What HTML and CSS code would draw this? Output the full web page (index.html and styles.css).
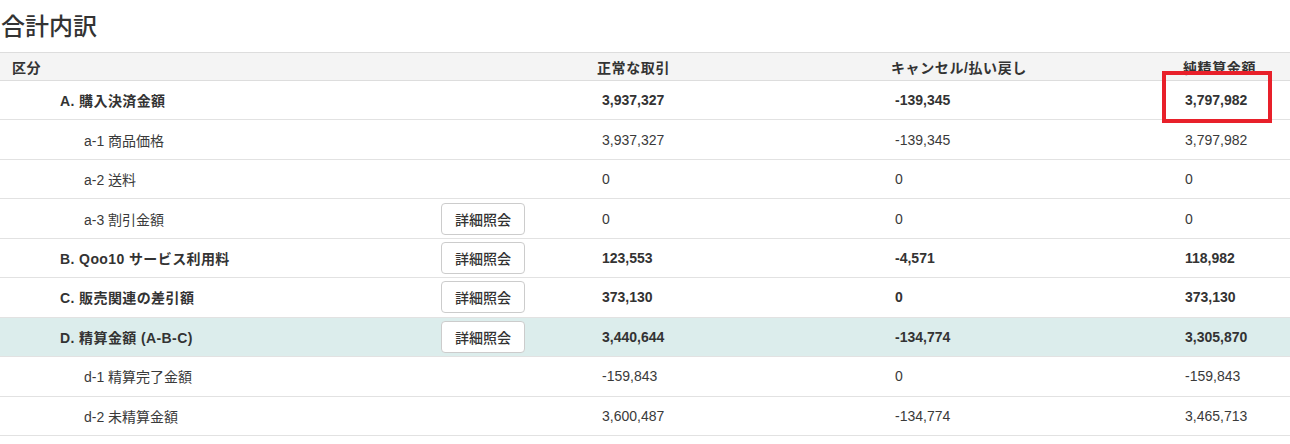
FILE: index.html
```html
<!DOCTYPE html>
<html lang="ja">
<head>
<meta charset="utf-8">
<title>合計内訳</title>
<link rel="stylesheet" href="styles.css">
</head>
<body>
<section class="summary">
  <h2 class="summary-title">合計内訳</h2>
  <table class="breakdown">
    <colgroup>
      <col class="col-label">
      <col class="col-action">
      <col class="col-normal">
      <col class="col-cancel">
      <col class="col-net">
    </colgroup>
    <thead>
      <tr>
        <th colspan="2" class="h-label">区分</th>
        <th class="h-normal">正常な取引</th>
        <th class="h-cancel">キャンセル/払い戻し</th>
        <th class="h-net">純精算金額</th>
      </tr>
    </thead>
    <tbody>
      <tr class="main">
        <td class="label">A. 購入決済金額</td>
        <td></td>
        <td class="num">3,937,327</td>
        <td class="num">-139,345</td>
        <td class="num">3,797,982</td>
      </tr>
      <tr class="sub">
        <td class="label">a-1 商品価格</td>
        <td></td>
        <td class="num">3,937,327</td>
        <td class="num">-139,345</td>
        <td class="num">3,797,982</td>
      </tr>
      <tr class="sub">
        <td class="label">a-2 送料</td>
        <td></td>
        <td class="num">0</td>
        <td class="num">0</td>
        <td class="num">0</td>
      </tr>
      <tr class="sub">
        <td class="label">a-3 割引金額</td>
        <td><button class="btn" type="button">詳細照会</button></td>
        <td class="num">0</td>
        <td class="num">0</td>
        <td class="num">0</td>
      </tr>
      <tr class="main">
        <td class="label">B. Qoo10 サービス利用料</td>
        <td><button class="btn" type="button">詳細照会</button></td>
        <td class="num">123,553</td>
        <td class="num">-4,571</td>
        <td class="num">118,982</td>
      </tr>
      <tr class="main">
        <td class="label">C. 販売関連の差引額</td>
        <td><button class="btn" type="button">詳細照会</button></td>
        <td class="num">373,130</td>
        <td class="num">0</td>
        <td class="num">373,130</td>
      </tr>
      <tr class="main total">
        <td class="label">D. 精算金額 (A-B-C)</td>
        <td><button class="btn" type="button">詳細照会</button></td>
        <td class="num">3,440,644</td>
        <td class="num">-134,774</td>
        <td class="num">3,305,870</td>
      </tr>
      <tr class="sub">
        <td class="label">d-1 精算完了金額</td>
        <td></td>
        <td class="num">-159,843</td>
        <td class="num">0</td>
        <td class="num">-159,843</td>
      </tr>
      <tr class="sub">
        <td class="label">d-2 未精算金額</td>
        <td></td>
        <td class="num">3,600,487</td>
        <td class="num">-134,774</td>
        <td class="num">3,465,713</td>
      </tr>
    </tbody>
  </table>
  <div class="highlight-box" aria-hidden="true"></div>
</section>
</body>
</html>
```

FILE: styles.css
```css
html, body {
  margin: 0;
  padding: 0;
  background: #ffffff;
}

body {
  font-family: "Liberation Sans", Arial, "Noto Sans CJK JP", sans-serif;
  font-size: 14px;
  color: #333333;
}

.summary {
  position: relative;
  width: 1290px;
}

.summary-title {
  margin: 0;
  padding: 7px 0 9px 1px;
  height: 36px;
  line-height: 36px;
  font-size: 24px;
  font-weight: 500;
  color: #333333;
  font-family: "Noto Sans CJK JP", sans-serif;
}

.breakdown {
  width: 1290px;
  border-collapse: collapse;
  table-layout: fixed;
}

.col-label { width: 430px; }
.col-action { width: 160px; }
.col-normal { width: 293px; }
.col-cancel { width: 290px; }
.col-net { width: 117px; }

.breakdown th {
  background: #f4f4f4;
  border-top: 1px solid #dddddd;
  border-bottom: 1px solid #dddddd;
  height: 27px;
  padding: 0;
  text-align: left;
  font-weight: bold;
  font-size: 14px;
  letter-spacing: 0.6px;
  color: #333333;
  white-space: nowrap;
}

.h-label { padding-left: 12px !important; }
.h-normal { padding-left: 7px !important; }
.h-cancel { padding-left: 8px !important; }
.h-net { padding-left: 10px !important; }

.breakdown td {
  height: 38.45px;
  padding: 0 0 0 12px;
  border-bottom: 1px solid #e2e2e2;
  vertical-align: middle;
  white-space: nowrap;
}

.breakdown td.label {
  padding-left: 60px;
}

.breakdown tr.sub td.label {
  padding-left: 84px;
}

.breakdown td:nth-child(2) {
  padding-left: 11px;
}

.main td {
  font-weight: bold;
}

.main td.label {
  letter-spacing: 0.4px;
}

.sub td {
  font-weight: normal;
  color: #3a3a3a;
}

.total td {
  background: #dcedec;
}

.btn {
  display: block;
  width: 84px;
  height: 32px;
  padding: 0;
  background: #ffffff;
  border: 1px solid #cccccc;
  border-radius: 4px;
  font-family: "Noto Sans CJK JP", sans-serif;
  font-size: 14px;
  font-weight: 500;
  color: #333333;
  letter-spacing: 0;
  cursor: pointer;
}

.highlight-box {
  position: absolute;
  left: 1162px;
  top: 71px;
  width: 110px;
  height: 52px;
  box-sizing: border-box;
  border: 4px solid #e8202a;
  pointer-events: none;
}
```
